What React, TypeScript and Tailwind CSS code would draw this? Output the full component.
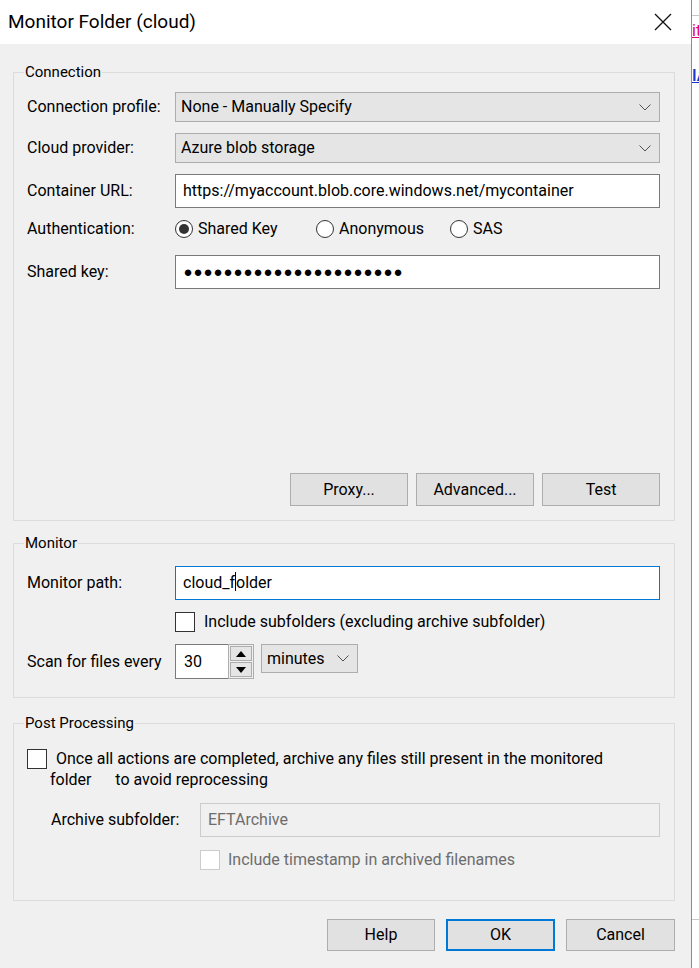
import React from "react";

function Chevron() {
  return (
    <svg width="12" height="7" viewBox="0 0 12 7" fill="none">
      <polyline points="0.5,0.5 6,6 11.5,0.5" stroke="#505050" strokeWidth="1" />
    </svg>
  );
}

function Select({ value, className = "" }: { value: string; className?: string }) {
  return (
    <div
      className={`flex items-center justify-between border border-[#adadad] bg-[#e5e5e5] pl-[5px] pr-[8px] ${className}`}
    >
      <span>{value}</span>
      <Chevron />
    </div>
  );
}

function TextBox({
  children,
  className = "",
}: {
  children: React.ReactNode;
  className?: string;
}) {
  return (
    <div className={`flex h-[34px] items-center border bg-white pl-[7px] ${className}`}>
      {children}
    </div>
  );
}

function Radio({ checked, label, className = "" }: { checked?: boolean; label: string; className?: string }) {
  return (
    <div className={`flex items-center gap-[5px] ${className}`}>
      <span className="flex h-[18px] w-[18px] items-center justify-center rounded-full border border-[#333333] bg-white">
        {checked && <span className="h-[10px] w-[10px] rounded-full bg-[#333333]" />}
      </span>
      <span>{label}</span>
    </div>
  );
}

function Checkbox({ disabled }: { disabled?: boolean }) {
  return (
    <span
      className={`inline-block h-[20px] w-[20px] shrink-0 border bg-white ${
        disabled ? "border-[#cccccc]" : "border-[#333333]"
      }`}
    />
  );
}

function Button({
  children,
  className = "",
}: {
  children: React.ReactNode;
  className?: string;
}) {
  return (
    <button className={`flex items-center justify-center bg-[#e1e1e1] ${className}`}>
      {children}
    </button>
  );
}

function Group({ title, children, className = "" }: { title: string; children: React.ReactNode; className?: string }) {
  return (
    <fieldset className={`border border-[#dcdcdc] ${className}`}>
      <legend className="ml-[10px] px-[1px] text-[15px] leading-[20px]">{title}</legend>
      {children}
    </fieldset>
  );
}

function Row({ label, children, className = "" }: { label: string; children: React.ReactNode; className?: string }) {
  return (
    <div className={`flex items-center ${className}`}>
      <span className="w-[148px] shrink-0">{label}</span>
      {children}
    </div>
  );
}

export default function App() {
  return (
    <div className="flex h-[968px] w-[699px] overflow-hidden bg-white font-['Roboto',sans-serif] text-[16px] leading-[20px] text-black">
      <div className="flex h-full w-[692px] shrink-0 flex-col border-r border-[#8c8c8c] bg-[#f0f0f0]">
        {/* title bar */}
        <div className="flex h-[44px] shrink-0 items-center justify-between bg-white pl-[8px] pr-[19px]">
          <span className="text-[19px]">Monitor Folder (cloud)</span>
          <svg width="18" height="18" viewBox="0 0 18 18">
            <path d="M1 1 L17 17 M17 1 L1 17" stroke="#111" strokeWidth="1.3" />
          </svg>
        </div>

        <div className="pl-[13px] pr-[16px] pt-[18px]">
          <Group title="Connection">
            <div className="flex flex-col pb-[14px] pl-[13px] pr-[14px] pt-[10px]">
              <Row label="Connection profile:">
                <Select value="None - Manually Specify" className="h-[30px] w-[485px]" />
              </Row>
              <Row label="Cloud provider:" className="mt-[11px]">
                <Select value="Azure blob storage" className="h-[30px] w-[485px]" />
              </Row>
              <Row label="Container URL:" className="mt-[11px]">
                <TextBox className="w-[485px] border-[#7a7a7a]">
                  https://myaccount.blob.core.windows.net/mycontainer
                </TextBox>
              </Row>
              <Row label="Authentication:" className="mt-[4px] h-[34px]">
                <Radio checked label="Shared Key" className="w-[141px]" />
                <Radio label="Anonymous" className="w-[134px]" />
                <Radio label="SAS" />
              </Row>
              <Row label="Shared key:" className="mt-[9px]">
                <TextBox className="w-[485px] border-[#7a7a7a]">
                  <span className="flex">
                    {Array.from({ length: 22 }).map((_, i) => (
                      <span key={i} className="w-[10px] text-center text-[15px]">
                        ●
                      </span>
                    ))}
                  </span>
                </TextBox>
              </Row>
              <div className="mt-[184px] flex justify-end gap-[8px]">
                <Button className="h-[33px] w-[118px] border border-[#adadad]">Proxy...</Button>
                <Button className="h-[33px] w-[118px] border border-[#adadad]">Advanced...</Button>
                <Button className="h-[33px] w-[118px] border border-[#adadad]">Test</Button>
              </div>
            </div>
          </Group>

          <Group title="Monitor" className="mt-[12px]">
            <div className="flex flex-col pb-[18px] pl-[13px] pr-[14px] pt-[13px]">
              <Row label="Monitor path:">
                <TextBox className="w-[485px] border-[#0078d7]">
                  <span>cloud_f</span>
                  <span className="inline-block h-[19px] w-px -translate-y-[2px] bg-black" />
                  <span>older</span>
                </TextBox>
              </Row>
              <div className="mt-[12px] flex h-[20px] items-center pl-[148px]">
                <Checkbox />
                <span className="ml-[9px]">Include subfolders (excluding archive subfolder)</span>
              </div>
              <div className="mt-[12px] flex h-[35px] items-center">
                <span className="w-[148px] shrink-0">Scan for files every</span>
                <div className="flex h-[35px]">
                  <div className="flex w-[53px] items-center border border-r-0 border-[#7a7a7a] bg-white pl-[8px]">
                    30
                  </div>
                  <div className="flex w-[26px] flex-col gap-px border border-[#adadad] bg-[#f0f0f0] p-px">
                    <div className="flex flex-1 items-center justify-center border border-[#adadad] bg-[#e5e5e5]">
                      <svg width="10" height="6" viewBox="0 0 10 6">
                        <polygon points="0,6 10,6 5,0" fill="#000" />
                      </svg>
                    </div>
                    <div className="flex flex-1 items-center justify-center border border-[#adadad] bg-[#e5e5e5]">
                      <svg width="10" height="6" viewBox="0 0 10 6">
                        <polygon points="0,0 10,0 5,6" fill="#000" />
                      </svg>
                    </div>
                  </div>
                </div>
                <Select value="minutes" className="ml-[7px] h-[29px] w-[97px] self-start" />
              </div>
            </div>
          </Group>

          <Group title="Post Processing" className="mt-[15px]">
            <div className="flex flex-col pb-[30px] pl-[13px] pr-[14px] pt-[15px]">
              <div className="flex items-start">
                <span className="mt-[1px] flex">
                  <Checkbox />
                </span>
                <div className="ml-[3px] leading-[21px]">
                  <div className="pl-[6px]">
                    Once all actions are completed, archive any files still present in the monitored
                  </div>
                  <div className="whitespace-pre">folder      to avoid reprocessing</div>
                </div>
              </div>
              <div className="mt-[13px] flex items-center pl-[24px]">
                <span className="w-[149px] shrink-0">Archive subfolder:</span>
                <TextBox className="w-[460px] border-[#cccccc] !bg-[#f0f0f0] text-[#6d6d6d]">EFTArchive</TextBox>
              </div>
              <div className="mt-[13px] flex h-[20px] items-center pl-[173px]">
                <Checkbox disabled />
                <span className="ml-[8px] text-[#6d6d6d]">Include timestamp in archived filenames</span>
              </div>
            </div>
          </Group>

          <div className="mt-[18px] flex justify-end gap-[11px]">
            <Button className="h-[32px] w-[108px] border border-[#adadad]">Help</Button>
            <Button className="h-[32px] w-[109px] border-2 border-[#0078d7]">OK</Button>
            <Button className="h-[32px] w-[109px] border border-[#adadad]">Cancel</Button>
          </div>
        </div>
      </div>

      {/* sliver of the page behind the dialog */}
      <div className="flex w-[7px] shrink-0 flex-col overflow-hidden">
        <div className="h-[15px] shrink-0" />
        <div className="h-px shrink-0 bg-[#c8c8c8]" />
        <div className="mt-[6px] whitespace-nowrap leading-[18px] text-[#e0007a] underline">it</div>
        <div className="mt-[27px] whitespace-nowrap font-semibold leading-[18px] text-[#1a35c8] underline">IA</div>
        <div className="flex-1" />
        <div className="mb-[48px] h-px shrink-0 bg-[#c8c8c8]" />
      </div>
    </div>
  );
}
